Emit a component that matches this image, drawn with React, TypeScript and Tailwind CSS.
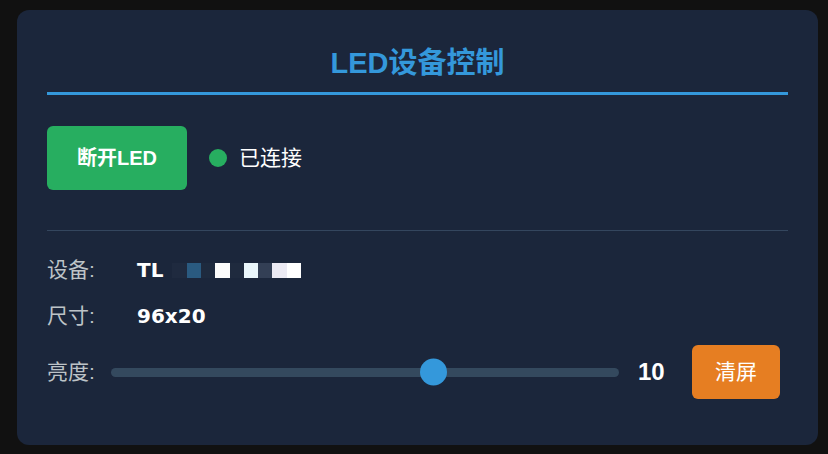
import React from 'react'

// redacted device id, drawn as the mosaic blocks seen in the screenshot
const MOSAIC = [
  '#1f2a3f',
  '#2a5a80',
  '#1e2a3e',
  '#fbfbfb',
  '#1f2a3e',
  '#eaf6fb',
  '#333f55',
  '#ebeaf3',
  '#ffffff',
]

const MIN = 1
const MAX = 15
const BRIGHTNESS = 10

const valueFont = { fontFamily: '"DejaVu Sans", "Noto Sans CJK SC", sans-serif' }

export default function App() {
  const pct = (BRIGHTNESS - MIN) / (MAX - MIN)

  return (
    <div
      className="min-h-[454px] w-full bg-[#111111] pt-[10px] pl-[17px] pr-[10px]"
      style={{ fontFamily: '"Liberation Sans", "Noto Sans CJK SC", sans-serif' }}
    >
      <div className="w-[801px] h-[435px] rounded-[12px] bg-[#1b263b] px-[30px] pt-[36px]">
        {/* Header */}
        <h2 className="text-center text-[29px] leading-[34px] font-bold text-[#3498db] pb-[12px] border-b-[3px] border-[#3498db]">
          LED设备控制
        </h2>

        {/* Connection row */}
        <div className="mt-[31px] flex items-center">
          <button className="h-[64px] w-[140px] rounded-[6px] bg-[#27ae60] text-white text-[20px] font-bold">
            断开LED
          </button>
          <span className="ml-[22px] w-[18px] h-[18px] rounded-full bg-[#27ae60]" />
          <span className="ml-[12px] text-white text-[21px]">已连接</span>
        </div>

        <div className="mt-[40px] h-px bg-[#34465e]" />

        {/* Info */}
        <div className="mt-[24px] flex items-center h-[30px]">
          <span className="w-[90px] text-[21px] text-[#bdc3c7]">设备:</span>
          <span className="flex items-center text-[20px] font-bold text-white" style={valueFont}>
            TL
            <span className="ml-[9px] flex">
              {MOSAIC.map((c, i) => (
                <span key={i} className="block w-[14.3px] h-[15px]" style={{ backgroundColor: c }} />
              ))}
            </span>
          </span>
        </div>
        <div className="mt-[16px] flex items-center h-[30px]">
          <span className="w-[90px] text-[21px] text-[#bdc3c7]">尺寸:</span>
          <span className="text-[20px] font-bold text-white" style={valueFont}>
            96x20
          </span>
        </div>

        {/* Brightness */}
        <div className="mt-[14px] flex items-center h-[54px] pr-[8px]">
          <span className="w-[64px] text-[21px] text-[#bdc3c7]">亮度:</span>
          <div className="flex-1 relative h-[9px] rounded-full bg-[#34495e]">
            <span
              className="absolute top-1/2 -translate-y-1/2 w-[27px] h-[27px] rounded-full bg-[#3498db]"
              style={{ left: `calc(${pct} * (100% - 27px))` }}
            />
          </div>
          <span className="ml-[19px] w-[44px] text-[24px] font-bold text-white">{BRIGHTNESS}</span>
          <button className="ml-[10px] h-[54px] w-[88px] rounded-[6px] bg-[#e67e22] text-white text-[21px]">
            清屏
          </button>
        </div>
      </div>
    </div>
  )
}
